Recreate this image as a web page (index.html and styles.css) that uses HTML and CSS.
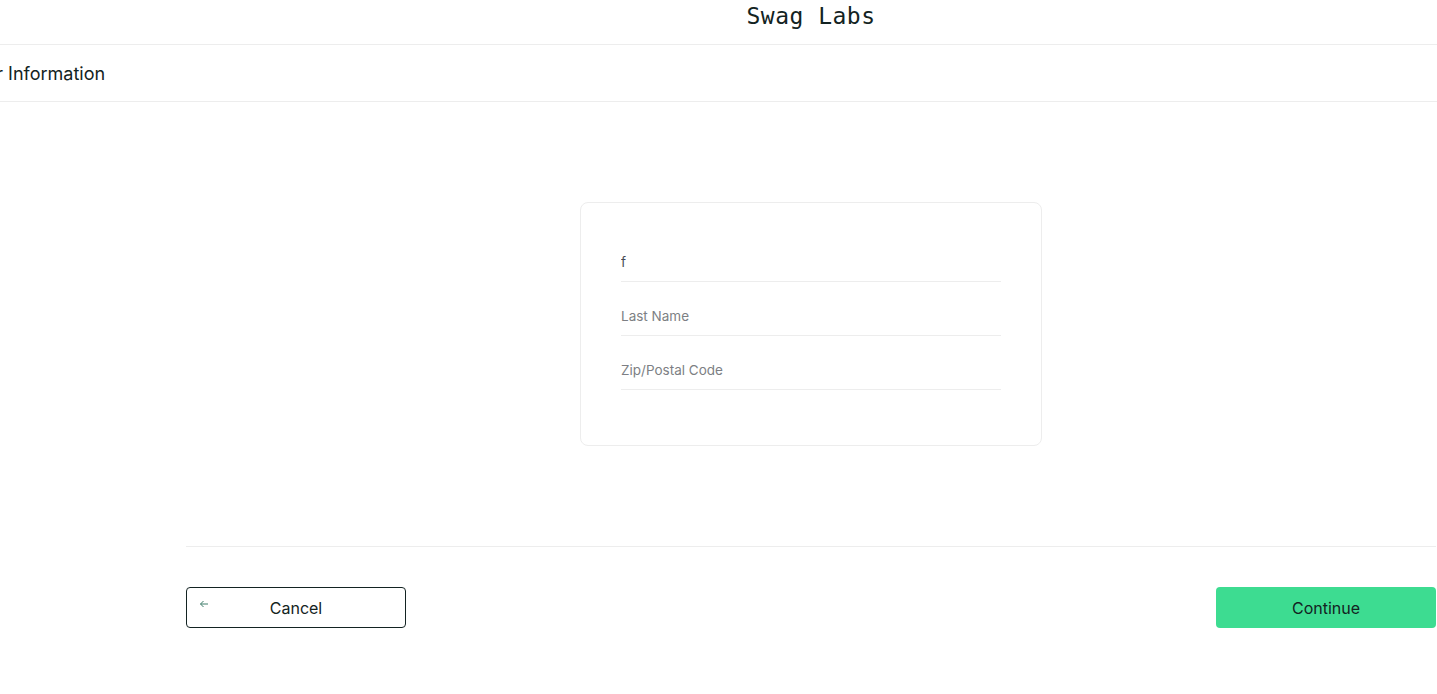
FILE: index.html
```html
<!DOCTYPE html>
<html lang="en">
<head>
<meta charset="utf-8">
<title>Swag Labs</title>
<link rel="stylesheet" href="styles.css">
</head>
<body>
<div class="primary-header">
  <div class="brand-wrap"><div class="app-logo">Swag Labs</div></div>
</div>
<div class="secondary-header">
  <span class="title">Your Information</span>
</div>
<div class="checkout-container">
  <div class="info-card">
    <div class="form-group"><input class="field" type="text" value="f"></div>
    <div class="form-group"><input class="field" type="text" placeholder="Last Name"></div>
    <div class="form-group"><input class="field" type="text" placeholder="Zip/Postal Code"></div>
  </div>
  <div class="footer">
    <button class="btn btn-cancel">
      <svg class="back-icon" width="10" height="10" viewBox="0 0 10 10"><path d="M9 5H1.5M4.5 2L1.5 5L4.5 8" fill="none" stroke="#3e7c6a" stroke-width="1"/></svg>
      <span>Cancel</span>
    </button>
    <button class="btn btn-continue">Continue</button>
  </div>
</div>
</body>
</html>
```

FILE: styles.css
```css
html, body {
  margin: 0;
  padding: 0;
  background: #ffffff;
  overflow: hidden;
}
body {
  font-family: "Inter", "Liberation Sans", sans-serif;
  color: #132322;
}
.primary-header {
  height: 44px;
  border-bottom: 1px solid #ededed;
}
.brand-wrap {
  margin-left: 185px;
  width: 1252px;
  display: flex;
  justify-content: center;
}
.app-logo {
  font-family: "DejaVu Sans Mono", "Liberation Mono", monospace;
  font-size: 23px;
  line-height: 33px;
  letter-spacing: 0.5px;
  color: #132322;
}
.secondary-header {
  height: 56px;
  border-bottom: 1px solid #ededed;
  display: flex;
  align-items: center;
}
.title {
  margin-left: -36px;
  font-size: 18px;
  font-weight: 400;
  color: #132322;
}
.checkout-container {
  margin-left: 186px;
  width: 1250px;
  padding-top: 100px;
}
.info-card {
  width: 380px;
  margin: 0 auto;
  padding: 39px 40px 41px;
  border: 1px solid #ededed;
  border-radius: 8px;
}
.form-group {
  margin-bottom: 14px;
}
.field {
  display: block;
  box-sizing: border-box;
  width: 100%;
  height: 40px;
  border: none;
  border-bottom: 1px solid #ededed;
  padding: 0;
  font-family: "Inter", "Liberation Sans", sans-serif;
  font-size: 13.5px;
  color: #484c55;
  outline: none;
  background: transparent;
}
.field::placeholder {
  color: #7d7f84;
}
.footer {
  margin-top: 100px;
  border-top: 1px solid #ededed;
  padding-top: 40px;
  display: flex;
  justify-content: space-between;
}
.btn {
  width: 220px;
  height: 41px;
  border-radius: 4px;
  font-family: "Inter", "Liberation Sans", sans-serif;
  font-size: 16px;
  font-weight: 400;
  color: #132322;
  cursor: pointer;
}
.btn-cancel {
  position: relative;
  background: #ffffff;
  border: 1px solid #132322;
}
.back-icon {
  position: absolute;
  left: 12px;
  top: 11px;
}
.btn-continue {
  background: #3ddc91;
  border: none;
}
```
